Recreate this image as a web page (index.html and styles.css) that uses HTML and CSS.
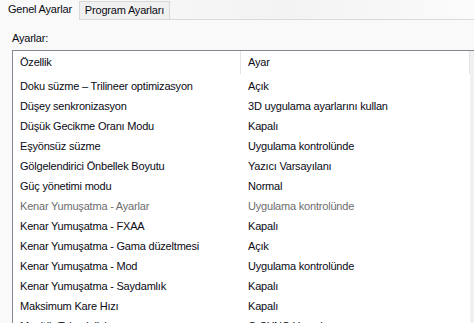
FILE: index.html
```html
<!DOCTYPE html>
<html lang="tr">
<head>
    <meta charset="UTF-8">
    <title>Genel Ayarlar</title>
    <link rel="stylesheet" href="styles.css">
</head>
<body>
    <div class="tabs">
        <div class="tab active">Genel Ayarlar</div>
        <div class="tab">Program Ayarları</div>
    </div>

    <div class="panel">
        <div class="label">Ayarlar:</div>
        <div class="listbox">
            <div class="list">
                <div class="row head">
                    <div class="cell">Özellik</div>
                    <div class="cell">Ayar</div>
                </div>
                <div class="row"><div class="cell">Doku süzme – Trilineer optimizasyon</div><div class="cell">Açık</div></div>
                <div class="row"><div class="cell">Düşey senkronizasyon</div><div class="cell">3D uygulama ayarlarını kullan</div></div>
                <div class="row"><div class="cell">Düşük Gecikme Oranı Modu</div><div class="cell">Kapalı</div></div>
                <div class="row"><div class="cell">Eşyönsüz süzme</div><div class="cell">Uygulama kontrolünde</div></div>
                <div class="row"><div class="cell">Gölgelendirici Önbellek Boyutu</div><div class="cell">Yazıcı Varsayılanı</div></div>
                <div class="row"><div class="cell">Güç yönetimi modu</div><div class="cell">Normal</div></div>
                <div class="row disabled"><div class="cell">Kenar Yumuşatma - Ayarlar</div><div class="cell">Uygulama kontrolünde</div></div>
                <div class="row"><div class="cell">Kenar Yumuşatma - FXAA</div><div class="cell">Kapalı</div></div>
                <div class="row"><div class="cell">Kenar Yumuşatma - Gama düzeltmesi</div><div class="cell">Açık</div></div>
                <div class="row"><div class="cell">Kenar Yumuşatma - Mod</div><div class="cell">Uygulama kontrolünde</div></div>
                <div class="row"><div class="cell">Kenar Yumuşatma - Saydamlık</div><div class="cell">Kapalı</div></div>
                <div class="row"><div class="cell">Maksimum Kare Hızı</div><div class="cell">Kapalı</div></div>
                <div class="row"><div class="cell">Monitör Teknolojisi</div><div class="cell">G-SYNC Uyumlu</div></div>
            </div>
            <div class="scroll"></div>
        </div>
    </div>
</body>
</html>
```

FILE: styles.css
```css
html, body {
    margin: 0;
    height: 100%;
    overflow: hidden;
}
body {
    font-family: "Liberation Sans", Tahoma, sans-serif;
    font-size: 11px;
    letter-spacing: -0.2px;
    color: #0a0a14;
    background: #f9f9f9;
}
.tabs {
    display: flex;
    height: 19px;
    background: linear-gradient(to right, #fbfbfb, #f3f3f3 60%, #fbfbfb);
    border-bottom: 1px solid #dadada;
    align-items: flex-end;
}
.tab {
    padding: 0 5px;
    height: 17px;
    line-height: 17px;
    background: #f0f0f0;
    border: 1px solid #d9d9d9;
    border-bottom: none;
}
.tab.active {
    height: 19px;
    line-height: 17px;
    padding: 0 6px 0 7px;
    background: #f9f9f9;
    border-color: transparent;
    margin-bottom: -1px;
}
.panel {
    padding: 10px 0 0 12px;
}
.label {
    height: 20px;
    line-height: 17px;
}
.listbox {
    display: flex;
    border-top: 1px solid #828790;
    border-left: 1px solid #828790;
    background: #fff;
    height: 300px;
}
.list {
    flex: 1;
}
.scroll {
    width: 4px;
    background: #f0f0f0;
}
.row {
    display: grid;
    grid-template-columns: 228px 1fr;
    height: 20px;
    line-height: 20px;
}
.row.head {
    height: 23px;
    line-height: 22px;
    margin-bottom: 2px;
}
.row.head .cell {
    border-right: 1px solid #e5e5e5;
}
.cell {
    padding-left: 7px;
    white-space: nowrap;
    overflow: hidden;
}
.disabled {
    color: #6d6d6d;
}
```
